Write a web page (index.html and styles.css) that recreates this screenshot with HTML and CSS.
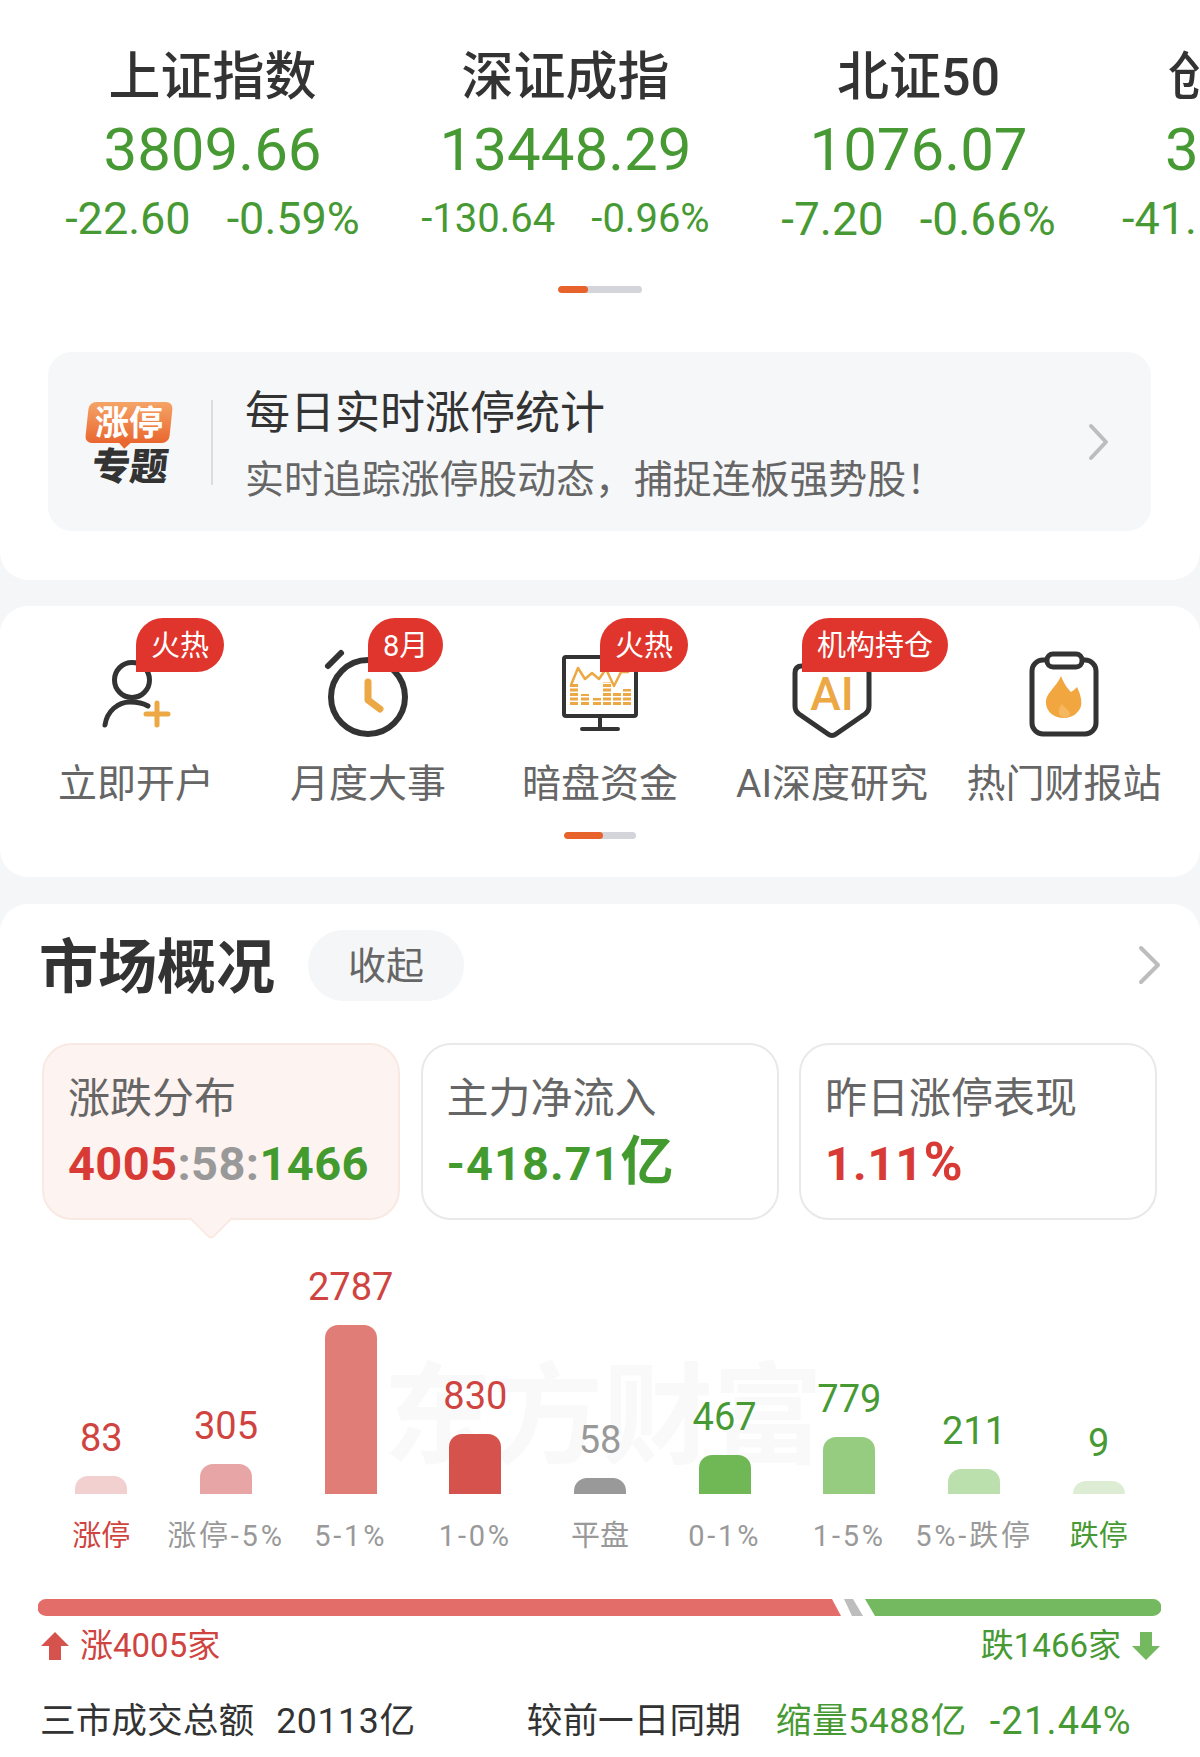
FILE: index.html
```html
<!DOCTYPE html>
<html lang="zh-CN">
<head>
    <meta charset="UTF-8">
    <meta name="viewport" content="width=device-width, initial-scale=1.0">
    <title>市场概况</title>
    <link rel="stylesheet" href="styles.css">
</head>
<body>
    <section class="card card-top">
        <div class="index-strip">
            <div class="index-col">
                <div class="index-name">上证指数</div>
                <div class="index-value">3809.66</div>
                <div class="index-change"><span>-22.60</span><span>-0.59%</span></div>
            </div>
            <div class="index-col index-col-small">
                <div class="index-name">深证成指</div>
                <div class="index-value">13448.29</div>
                <div class="index-change"><span>-130.64</span><span>-0.96%</span></div>
            </div>
            <div class="index-col index-col-large">
                <div class="index-name">北证50</div>
                <div class="index-value">1076.07</div>
                <div class="index-change"><span>-7.20</span><span>-0.66%</span></div>
            </div>
            <div class="index-col index-col-cut">
                <div class="index-name">创业板指</div>
                <div class="index-value">3</div>
                <div class="index-change"><span>-41.</span></div>
            </div>
        </div>
        <div class="pager pager-top"><i></i></div>

        <div class="banner">
            <div class="logo">
                <div class="logo-tag"><span>涨停</span></div>
                <div class="logo-sub">专题</div>
            </div>
            <div class="banner-text">
                <div class="banner-title">每日实时涨停统计</div>
                <div class="banner-sub">实时追踪涨停股动态，捕捉连板强势股！</div>
            </div>
            <svg class="banner-arrow" width="22" height="38" viewBox="0 0 22 38"><path d="M3 3 L18 19 L3 35" /></svg>
        </div>
    </section>

    <section class="card card-menu">
        <div class="menu">
            <div class="menu-item">
                <span class="badge">火热</span>
                <svg class="menu-icon" width="120" height="100" viewBox="0 0 120 100">
                    <circle class="ink" cx="56" cy="32" r="17.5" />
                    <path class="ink" d="M29 77 C31 63 42 54 54 54 C60 54 67 55 72 58" />
                    <path class="gold" d="M70 66 H92 M81 55 V77" />
                </svg>
                <div class="menu-label">立即开户</div>
            </div>
            <div class="menu-item">
                <span class="badge">8月</span>
                <svg class="menu-icon" width="120" height="100" viewBox="0 0 120 100">
                    <circle class="ink ink-thick" cx="60" cy="49" r="37" />
                    <path class="ink ink-thick" d="M20 18 L33 5" />
                    <path class="gold gold-thick" d="M60 34 V52 L72 61" />
                </svg>
                <div class="menu-label">月度大事</div>
            </div>
            <div class="menu-item">
                <span class="badge">火热</span>
                <svg class="menu-icon" width="120" height="100" viewBox="0 0 120 100">
                    <rect class="ink ink-thin" x="24" y="9" width="72" height="59" rx="2" />
                    <path class="ink ink-thin" d="M60 68 V81 M42 81 H78" />
                    <path class="gold gold-thin" d="M31 37 L38 20 L45 31 L52 25 L59 31 L66 21 L74 38 L81 24 L88 24" />
                    <path class="levels" d="M34 57 V36 M45 57 V46 M57 57 V50 M67 57 V34 M77 57 V45 M87 57 V41" />
                </svg>
                <div class="menu-label">暗盘资金</div>
            </div>
            <div class="menu-item">
                <span class="badge badge-wide">机构持仓</span>
                <svg class="menu-icon" width="120" height="100" viewBox="0 0 120 100">
                    <path class="ink" d="M30 18 H90 Q97 18 97 25 V58 Q97 63 93 66 L64 86 Q60 89 56 86 L27 66 Q23 63 23 58 V25 Q23 18 30 18 Z" />
                    <text class="ai-text" x="60" y="62" text-anchor="middle">AI</text>
                </svg>
                <div class="menu-label">AI深度研究</div>
            </div>
            <div class="menu-item">
                <svg class="menu-icon" width="120" height="100" viewBox="0 0 120 100">
                    <rect class="ink" x="28" y="12" width="64" height="74" rx="11" />
                    <rect class="ink clip" x="43" y="6" width="35" height="13" rx="6" />
                    <path class="flame" d="M57 28 C60 36 64 41 67 44 C69 43 71 41 73 39 C77 47 78 54 77 58 C75 65 68 70 60 70 C50 70 43 64 42 56 C41 45 52 40 57 28 Z" />
                    <path class="flame-in" d="M60 70 C54 68 53 62 58 56 C60 60 66 62 66 66 C65 68 63 70 60 70 Z" />
                </svg>
                <div class="menu-label">热门财报站</div>
            </div>
        </div>
        <div class="pager pager-menu"><i></i></div>
    </section>

    <section class="card card-market">
        <div class="market-head">
            <h2>市场概况</h2>
            <span class="pill">收起</span>
            <svg class="market-arrow" width="24" height="40" viewBox="0 0 24 40"><path d="M3 3 L20 20 L3 37" /></svg>
        </div>

        <div class="stats">
            <div class="stat stat-active">
                <div class="stat-label">涨跌分布</div>
                <div class="stat-value stat-ratio"><span class="red">4005</span><span class="gray">:58:</span><span class="green">1466</span></div>
            </div>
            <div class="stat">
                <div class="stat-label">主力净流入</div>
                <div class="stat-value green">-418.71<span class="unit">亿</span></div>
            </div>
            <div class="stat">
                <div class="stat-label">昨日涨停表现</div>
                <div class="stat-value red">1.11<span class="unit">%</span></div>
            </div>
        </div>

        <div class="chart">
            <div class="watermark">东方财富</div>
            <div class="col"><div class="num red-l">83</div><div class="bar bar1" style="height:18px"></div><div class="tick tick-red">涨停</div></div>
            <div class="col"><div class="num red-l">305</div><div class="bar bar2" style="height:30px"></div><div class="tick tick-num">涨停-5%</div></div>
            <div class="col"><div class="num red-l">2787</div><div class="bar bar3" style="height:169px"></div><div class="tick tick-num">5-1%</div></div>
            <div class="col"><div class="num red-l">830</div><div class="bar bar4" style="height:60px"></div><div class="tick tick-num">1-0%</div></div>
            <div class="col"><div class="num gray">58</div><div class="bar bar5" style="height:16px"></div><div class="tick">平盘</div></div>
            <div class="col"><div class="num green-l">467</div><div class="bar bar6" style="height:39px"></div><div class="tick tick-num">0-1%</div></div>
            <div class="col"><div class="num green-l">779</div><div class="bar bar7" style="height:57px"></div><div class="tick tick-num">1-5%</div></div>
            <div class="col"><div class="num green-l">211</div><div class="bar bar8" style="height:25px"></div><div class="tick tick-num">5%-跌停</div></div>
            <div class="col"><div class="num green-l">9</div><div class="bar bar9" style="height:13px"></div><div class="tick tick-green">跌停</div></div>
        </div>

        <svg class="ratio" width="1123" height="17" viewBox="0 0 1123 17">
            <path fill="#e36d69" d="M8 0 H794 L803 17 H8 A8 8 0 0 1 8 0 Z" />
            <path fill="#bdbdbd" d="M806 0 H815 L825 17 H814 Z" />
            <path fill="#74b95f" d="M827 0 H1115 A8 8 0 0 1 1115 17 H837 Z" />
        </svg>

        <div class="ratio-legend">
            <div class="up">
                <svg width="28" height="28" viewBox="0 0 28 28"><path d="M14 0 L28 14 H20 V28 H8 V14 H0 Z" /></svg>
                <span>涨4005家</span>
            </div>
            <div class="down">
                <span>跌1466家</span>
                <svg width="28" height="28" viewBox="0 0 28 28"><path d="M14 28 L28 14 H20 V0 H8 V14 H0 Z" /></svg>
            </div>
        </div>

        <div class="turnover">
            <span class="turnover-total">三市成交总额</span>
            <span class="turnover-num">20113亿</span>
            <span class="turnover-prev">较前一日同期</span>
            <span class="turnover-diff">缩量5488亿</span>
            <span class="turnover-pct">-21.44%</span>
        </div>
    </section>
</body>
</html>
```

FILE: styles.css
```css
* {
    box-sizing: border-box;
}

body {
    margin: 0;
    height: 1757px;
    overflow: hidden;
    background: #f5f6f8;
    color: #333;
    font-family: Roboto, "Noto Sans CJK SC", sans-serif;
}

.card {
    background: #fff;
    border-radius: 28px;
}

.card-top {
    border-radius: 0 0 28px 28px;
    padding: 48px 0 49px;
}

.card-menu {
    margin-top: 26px;
    padding-top: 42px;
    padding-bottom: 38px;
}

.card-market {
    margin-top: 27px;
    border-radius: 28px 28px 0 0;
    padding-top: 26px;
    height: 854px;
}

/* index strip */
.index-strip {
    display: flex;
    padding-left: 36px;
    overflow: hidden;
}

.index-col {
    flex: 0 0 353px;
    text-align: center;
}

.index-name {
    font-size: 52px;
    line-height: 60px;
    font-weight: 500;
}

.index-value {
    margin-top: 7px;
    font-size: 60px;
    line-height: 70px;
    font-weight: 400;
    color: #479a33;
}

.index-change {
    margin-top: 8px;
    display: flex;
    justify-content: center;
    gap: 36px;
    font-size: 45px;
    line-height: 52px;
    color: #479a33;
}

.index-col-small .index-change {
    font-size: 40px;
}

.index-col-large .index-change {
    font-size: 46px;
}

.index-col-cut {
    text-align: left;
}

.index-col-cut .index-name {
    margin-left: 73px;
    white-space: nowrap;
}

.index-col-cut .index-value {
    margin-left: 70px;
}

.index-col-cut .index-change {
    justify-content: flex-start;
    margin-left: 27px;
}

.pager {
    height: 7px;
    border-radius: 4px;
    background: #d4d5da;
    overflow: hidden;
}

.pager i {
    display: block;
    height: 100%;
    background: #e8622c;
    border-radius: 4px;
}

.pager-top {
    width: 84px;
    margin: 41px auto 0;
}

.pager-top i {
    width: 30px;
}

.pager-menu {
    width: 72px;
    margin: 24px auto 0;
}

.pager-menu i {
    width: 39px;
}

/* banner */
.banner {
    display: flex;
    align-items: center;
    margin: 59px 49px 0 48px;
    height: 179px;
    border-radius: 24px;
    background: #f6f7f9;
}

.logo {
    width: 165px;
    height: 85px;
    margin-top: 2px;
    padding-left: 39px;
    border-right: 2px solid #dcdcdf;
}

.logo-tag {
    position: relative;
    width: 84px;
    height: 41px;
    margin-top: 2px;
    border-radius: 7px;
    background: linear-gradient(#f5a467, #e9672f);
    transform: skewX(-6deg);
    color: #fff;
    font-size: 34px;
    font-weight: 700;
    line-height: 43px;
    text-align: center;
}

.logo-tag span {
    display: block;
    transform: skewX(6deg);
}

.logo-tag::after {
    content: "";
    position: absolute;
    left: 36px;
    bottom: -4px;
    width: 8px;
    height: 8px;
    background: #e9672f;
    transform: rotate(45deg);
}

.logo-sub {
    margin-top: 5px;
    margin-left: 5px;
    font-size: 38px;
    font-weight: 900;
    line-height: 38px;
    color: #333;
    transform: skewX(-6deg);
}

.banner-text {
    margin-left: 32px;
    padding-top: 4px;
    flex: 1;
}

.banner-title {
    font-size: 45px;
    line-height: 62px;
    color: #333;
}

.banner-sub {
    margin-top: 10px;
    font-size: 38.9px;
    line-height: 50px;
    color: #666;
    white-space: nowrap;
}

.banner-arrow {
    margin-right: 41px;
}

.banner-arrow path,
.market-arrow path {
    fill: none;
    stroke: #bdbdbd;
    stroke-width: 4;
    stroke-linecap: round;
    stroke-linejoin: round;
}

/* menu */
.menu {
    display: grid;
    grid-template-columns: repeat(5, 232px);
    padding: 0 20px;
}

.menu-item {
    position: relative;
    text-align: center;
}

.menu-icon {
    display: block;
    margin: 0 auto;
}

.menu-label {
    margin-top: 12px;
    font-size: 39px;
    line-height: 48px;
    color: #666;
    white-space: nowrap;
}

.badge {
    position: absolute;
    z-index: 1;
    left: 116px;
    top: -30px;
    height: 54px;
    padding: 0 15px;
    border-radius: 27px 27px 27px 0;
    background: #e0352d;
    color: #fff;
    font-size: 29px;
    line-height: 56px;
    white-space: nowrap;
}

.badge-wide {
    left: 86px;
}

.ink,
.gold,
.levels {
    fill: none;
    stroke-linecap: round;
    stroke-linejoin: round;
}

.ink {
    stroke: #333;
    stroke-width: 5;
}

.ink-thick {
    stroke-width: 6;
}

.ink-thin {
    stroke-width: 4;
}

.clip {
    fill: #fff;
}

.gold {
    stroke: #eba844;
    stroke-width: 5;
}

.gold-thick {
    stroke-width: 7;
}

.gold-thin {
    stroke-width: 2.5;
}

.levels {
    stroke: #eba844;
    stroke-width: 8;
    stroke-linecap: butt;
    stroke-dasharray: 3 1.5;
}

.ai-text {
    fill: #eba844;
    font-family: Roboto, sans-serif;
    font-size: 46px;
    font-weight: 500;
}

.flame {
    fill: #f2a63f;
}

.flame-in {
    fill: #f5b860;
}

/* market */
.market-head {
    display: flex;
    align-items: center;
    padding: 0 38px 0 39px;
}

.market-head h2 {
    margin: 0;
    font-size: 59px;
    line-height: 75px;
    height: 71px;
    font-weight: 700;
    color: #333;
}

.pill {
    margin-left: 33px;
    width: 156px;
    height: 71px;
    border-radius: 36px;
    background: #f5f6f8;
    color: #666;
    font-size: 38px;
    line-height: 73px;
    text-align: center;
}

.market-arrow {
    margin-left: auto;
    margin-top: -2px;
}

.stats {
    display: grid;
    grid-template-columns: repeat(3, 358px);
    gap: 20.5px;
    margin: 42px 0 0 42px;
}

.stat {
    position: relative;
    height: 177px;
    padding: 29px 0 0 24px;
    border: 2px solid #e9e9ec;
    border-radius: 30px;
}

.stat-active {
    background: #fdf3f0;
    border-color: #f9e9e3;
}

.stat-active::after {
    content: "";
    position: absolute;
    left: 151px;
    bottom: -16px;
    width: 30px;
    height: 30px;
    background: #fdf3f0;
    border-right: 2px solid #f9e9e3;
    border-bottom: 2px solid #f9e9e3;
    border-bottom-right-radius: 5px;
    transform: rotate(45deg);
}

.stat-label {
    font-size: 42px;
    line-height: 50px;
    color: #666;
}

.stat-value {
    margin-top: 10px;
    font-size: 47px;
    line-height: 60px;
    font-weight: 700;
    letter-spacing: 1px;
}

.stat-ratio {
    letter-spacing: 0.4px;
}

.stat-value .unit {
    font-size: 53px;
    line-height: 0;
}

.red {
    color: #d83a35;
}

.gray {
    color: #999;
}

.green {
    color: #439a2e;
}

.red-l {
    color: #cf4440;
}

.green-l {
    color: #479a33;
}

/* bars */
.chart {
    position: relative;
    display: grid;
    grid-template-columns: repeat(9, 1fr);
    height: 293px;
    margin: 43px 39px 0;
}

.watermark {
    position: absolute;
    left: 344px;
    top: 93px;
    font-size: 110px;
    line-height: 124px;
    font-weight: 700;
    color: #f9f9f9;
    white-space: nowrap;
}

.col {
    position: relative;
    display: flex;
    flex-direction: column;
    justify-content: flex-end;
    align-items: center;
}

.num {
    margin-bottom: 16px;
    font-size: 38px;
    line-height: 44px;
}

.bar {
    width: 52px;
    border-radius: 13px 13px 0 0;
}

.bar1 { background: #f3d0d0; }
.bar2 { background: #e8a5a5; }
.bar3 { background: #e07d77; }
.bar4 { background: #d6534d; }
.bar5 { background: #999; }
.bar6 { background: #70b855; }
.bar7 { background: #96cc80; }
.bar8 { background: #bcdfae; }
.bar9 { background: #dcedd4; }

.tick {
    margin-top: 22px;
    font-size: 29px;
    line-height: 40px;
    color: #999;
    white-space: nowrap;
}

.tick-num {
    letter-spacing: 2.8px;
}

.tick-red {
    color: #cf4440;
}

.tick-green {
    color: #479a33;
}

.ratio {
    display: block;
    margin: 43px 0 0 38px;
}

.ratio-legend {
    display: flex;
    justify-content: space-between;
    margin: 10px 40px 0 41px;
    font-size: 33px;
    line-height: 40px;
}

.up,
.down {
    display: flex;
    align-items: center;
    gap: 11px;
}

.up {
    color: #cf4440;
}

.up svg {
    fill: #d6534d;
}

.down {
    color: #479a33;
}

.down svg {
    fill: #74b95f;
}

.turnover {
    display: flex;
    margin: 33px 0 0 40px;
    font-size: 35.7px;
    line-height: 44px;
    color: #333;
    white-space: nowrap;
}

.turnover-num {
    margin-left: 22px;
    letter-spacing: 0.6px;
}

.turnover-prev {
    margin-left: 111px;
}

.turnover-diff {
    margin-left: 35px;
    letter-spacing: 0.5px;
    color: #479a33;
}

.turnover-pct {
    margin-left: 23px;
    font-size: 38px;
    letter-spacing: 1.2px;
    color: #479a33;
}
```
